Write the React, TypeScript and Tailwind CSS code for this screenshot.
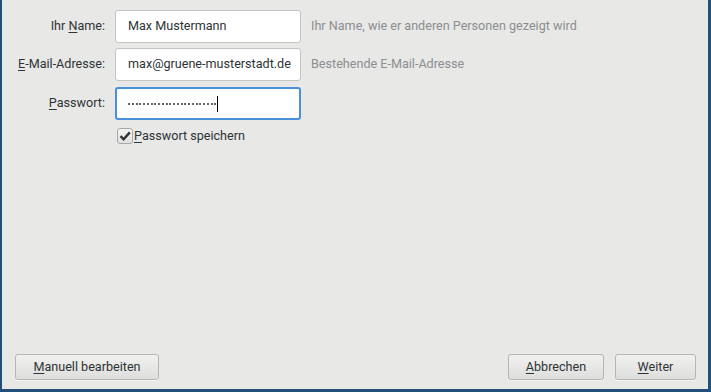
import React from "react";

const font = { fontFamily: "Roboto, 'Noto Sans', sans-serif" };

function Mn({ c }: { c: string }) {
  // mnemonic letter, underlined like GTK
  return <span className="underline underline-offset-[2px] decoration-1">{c}</span>;
}

function Btn({ children, w }: { children: React.ReactNode; w: string }) {
  return (
    <button
      className={`h-[26px] ${w} rounded-[3px] border border-[#b6b6b3] bg-gradient-to-b from-[#f1f1f0] to-[#dededc] text-[12.6px] text-[#2e3436] shadow-[0_1px_0_rgba(255,255,255,0.6)]`}
    >
      {children}
    </button>
  );
}

export default function App() {
  const dots = Array.from({ length: 24 });
  return (
    <div
      style={font}
      className="w-[711px] h-[392px] bg-[#e8e8e7] border-l-2 border-r-[3px] border-b-[3px] border-[#22507a] flex flex-col"
    >
      <div className="pt-[10px] grid grid-cols-[103px_186px_1fr] gap-x-[10px] gap-y-[5px] items-center text-[12.6px]">
        <div className="text-right text-[#2e3436]">
          Ihr <Mn c="N" />ame:
        </div>
        <div className="h-[33px] rounded-[3px] border border-[#c4c4c2] bg-white pl-[12px] flex items-center text-[#2e3436]">
          Max Mustermann
        </div>
        <div className="text-[#8b8e8f]">Ihr Name, wie er anderen Personen gezeigt wird</div>

        <div className="text-right text-[#2e3436]">
          <Mn c="E" />-Mail-Adresse:
        </div>
        <div className="h-[33px] rounded-[3px] border border-[#c4c4c2] bg-white pl-[12px] flex items-center text-[#2e3436]">
          max@gruene-musterstadt.de
        </div>
        <div className="text-[#8b8e8f]">Bestehende E-Mail-Adresse</div>

        <div className="text-right text-[#2e3436] mt-[1px]">
          <Mn c="P" />asswort:
        </div>
        <div className="mt-[1px] h-[33px] rounded-[3px] border-2 border-[#4a90d9] bg-white pl-[11px] flex items-center">
          <div className="flex gap-[1.75px]">
            {dots.map((_, i) => (
              <span key={i} className="w-[2px] h-[2px] rounded-full bg-[#2e3436]" />
            ))}
          </div>
          <span className="ml-[1px] w-px h-[16px] bg-black" />
        </div>
        <div />

        <div />
        <div className="flex items-center mt-[2px]">
          <div className="ml-[2px] w-[16px] h-[16px] rounded-[3px] border border-[#a8a8a6] bg-gradient-to-b from-[#f4f4f3] to-[#e0e0de] flex items-center justify-center">
            <svg width="14" height="14" viewBox="0 0 14 14">
              <path d="M2.5 7.2 L5.6 10.2 L11.8 3.4" fill="none" stroke="#2e3436" strokeWidth="2.4" />
            </svg>
          </div>
          <span className="ml-[1px] text-[#2e3436]">
            <Mn c="P" />asswort speichern
          </span>
        </div>
        <div />
      </div>

      <div className="mt-auto pb-[9px] pl-[13px] pr-[12px] flex items-center">
        <Btn w="w-[144px]">
          <Mn c="M" />anuell bearbeiten
        </Btn>
        <div className="ml-auto flex gap-[11px]">
          <Btn w="w-[96px]">
            <Mn c="A" />bbrechen
          </Btn>
          <Btn w="w-[81px]">
            <Mn c="W" />eiter
          </Btn>
        </div>
      </div>
    </div>
  );
}
